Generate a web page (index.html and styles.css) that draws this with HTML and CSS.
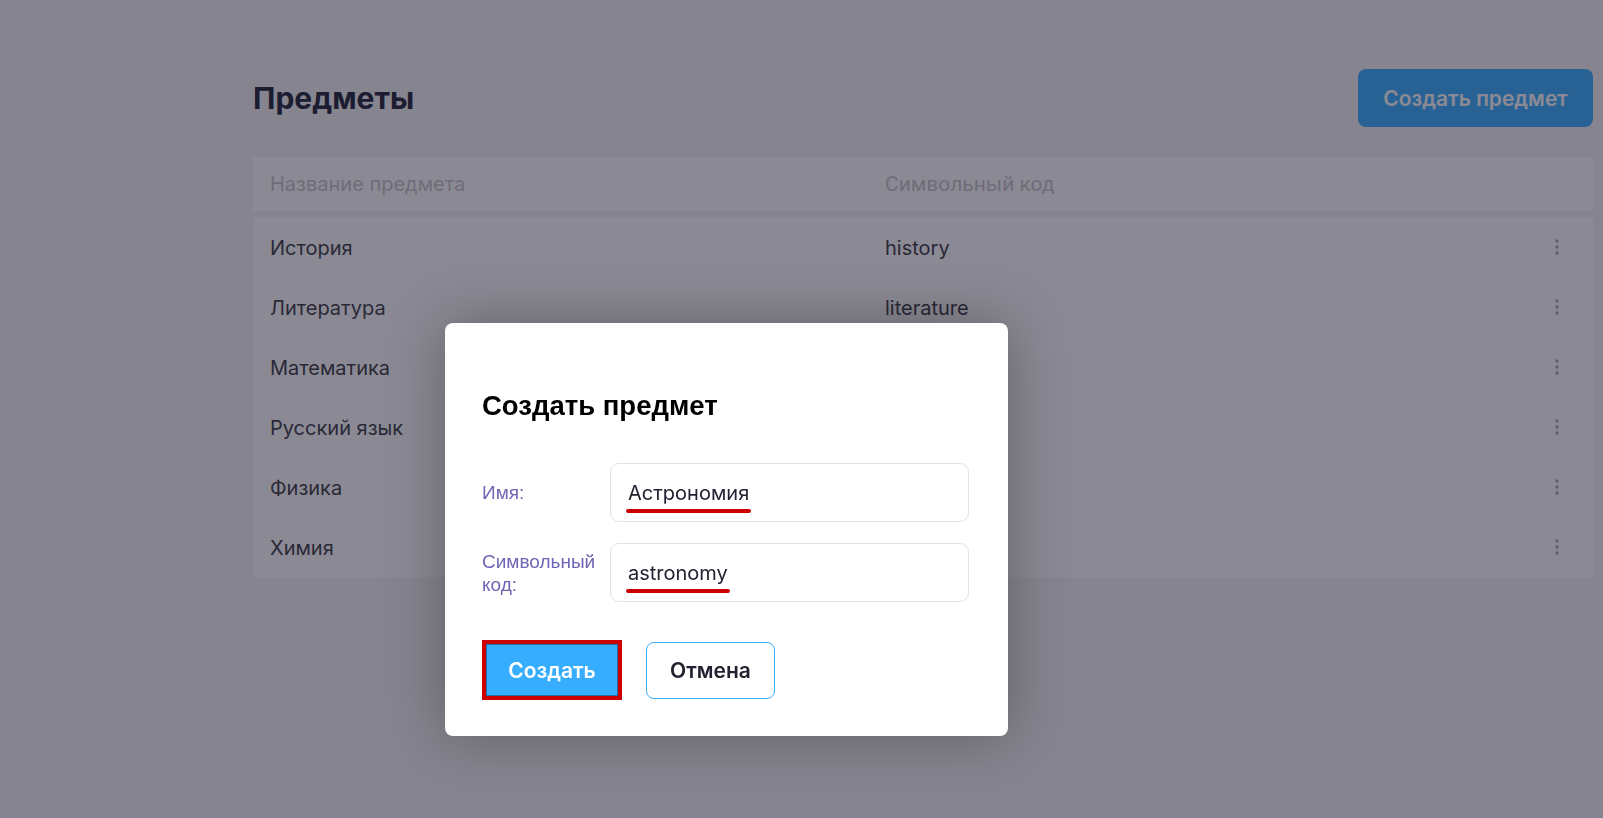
FILE: index.html
```html
<!DOCTYPE html>
<html lang="ru">
<head>
<meta charset="utf-8">
<title>Предметы</title>
<link rel="stylesheet" href="styles.css">
</head>
<body>
<div class="page">
  <div class="topbar">
    <h1 class="title">Предметы</h1>
    <button class="btn-create">Создать предмет</button>
  </div>
  <div class="table">
    <div class="thead">
      <div class="th">Название предмета</div>
      <div class="th th-cond"><span>Символьный код</span></div>
      <div></div>
    </div>
    <div class="tbody">
      <div class="row"><div class="cell">История</div><div class="cell">history</div><div class="more"><svg width="4" height="16" viewBox="0 0 4 16"><circle cx="2" cy="2" r="1.7"/><circle cx="2" cy="8" r="1.7"/><circle cx="2" cy="14" r="1.7"/></svg></div></div>
      <div class="row"><div class="cell">Литература</div><div class="cell">literature</div><div class="more"><svg width="4" height="16" viewBox="0 0 4 16"><circle cx="2" cy="2" r="1.7"/><circle cx="2" cy="8" r="1.7"/><circle cx="2" cy="14" r="1.7"/></svg></div></div>
      <div class="row"><div class="cell">Математика</div><div class="cell">mathematics</div><div class="more"><svg width="4" height="16" viewBox="0 0 4 16"><circle cx="2" cy="2" r="1.7"/><circle cx="2" cy="8" r="1.7"/><circle cx="2" cy="14" r="1.7"/></svg></div></div>
      <div class="row"><div class="cell">Русский язык</div><div class="cell">russian</div><div class="more"><svg width="4" height="16" viewBox="0 0 4 16"><circle cx="2" cy="2" r="1.7"/><circle cx="2" cy="8" r="1.7"/><circle cx="2" cy="14" r="1.7"/></svg></div></div>
      <div class="row"><div class="cell">Физика</div><div class="cell">physics</div><div class="more"><svg width="4" height="16" viewBox="0 0 4 16"><circle cx="2" cy="2" r="1.7"/><circle cx="2" cy="8" r="1.7"/><circle cx="2" cy="14" r="1.7"/></svg></div></div>
      <div class="row"><div class="cell">Химия</div><div class="cell">chemistry</div><div class="more"><svg width="4" height="16" viewBox="0 0 4 16"><circle cx="2" cy="2" r="1.7"/><circle cx="2" cy="8" r="1.7"/><circle cx="2" cy="14" r="1.7"/></svg></div></div>
    </div>
  </div>
</div>

<div class="overlay">
  <div class="modal">
    <h2 class="modal-title">Создать предмет</h2>
    <div class="form">
      <label class="label">Имя:</label>
      <div class="input"><span class="mark">Астрономия</span></div>
      <label class="label">Символьный код:</label>
      <div class="input"><span class="mark">astronomy</span></div>
    </div>
    <div class="actions">
      <button class="btn-submit">Создать</button>
      <button class="btn-cancel">Отмена</button>
    </div>
  </div>
</div>
</body>
</html>
```
FILE: styles.css
```css
* { box-sizing: border-box; }

html, body {
  margin: 0;
  height: 100%;
}

body {
  background: #f5f5f5;
  font-family: Inter, "Noto Sans", sans-serif;
  color: #3a3a44;
  overflow: hidden;
}

.page {
  padding: 69px 10px 0 253px;
}

.topbar {
  display: flex;
  justify-content: space-between;
  align-items: center;
  height: 58px;
}

.title {
  margin: 0;
  font-size: 30px;
  font-weight: 700;
  color: #22243a;
  line-height: 1;
}

.btn-create {
  width: 235px;
  height: 58px;
  border: none;
  border-radius: 8px;
  background: #38aeff;
  color: #fff;
  font-family: Inter, sans-serif;
  font-size: 21px;
  font-weight: 600;
}

.table {
  margin-top: 30px;
}

.thead,
.row {
  display: grid;
  grid-template-columns: 615px 1fr 72px;
  align-items: center;
  padding-left: 17px;
  background: #fff;
}

.thead {
  height: 54px;
}

.th {
  font-size: 20px;
  color: #c4c4c8;
}

.th-cond span {
  font-family: Roboto, sans-serif;
  font-size: 21px;
  white-space: nowrap;
}

.tbody {
  margin-top: 6px;
  background: #fff;
}

.row {
  height: 60px;
}

.cell {
  font-size: 20px;
  color: #3a3a44;
  padding-top: 1px;
}

.more {
  display: flex;
  justify-content: center;
  align-items: center;
}

.more svg {
  fill: #a7a7ab;
}

.overlay {
  position: fixed;
  inset: 0;
  background: rgba(23, 21, 41, 0.5);
}

.modal {
  position: absolute;
  left: 445px;
  top: 323px;
  width: 563px;
  height: 413px;
  background: #fff;
  border-radius: 8px;
  box-shadow: 0 0 60px rgba(0, 0, 0, 0.3);
  padding: 66px 39px 0 37px;
}

.modal-title {
  margin: 0;
  font-family: "Liberation Sans", Arial, sans-serif;
  font-size: 27.5px;
  font-weight: 700;
  color: #000;
  line-height: 34px;
}

.form {
  margin-top: 40px;
  display: grid;
  grid-template-columns: 128px 1fr;
  row-gap: 21px;
  align-items: center;
}

.label {
  font-family: "Liberation Sans", Arial, sans-serif;
  font-size: 19px;
  line-height: 23px;
  color: #6e66b4;
  padding-right: 8px;
}

.input {
  height: 59px;
  border: 1px solid #e2e2e6;
  border-radius: 9px;
  padding: 0 17px;
  display: flex;
  align-items: center;
  font-size: 20px;
  color: #222233;
}

.mark {
  position: relative;
}

.mark::after {
  content: "";
  position: absolute;
  left: -2px;
  right: -2px;
  bottom: -8px;
  height: 4px;
  border-radius: 2px;
  background: #cc0000;
}

.actions {
  margin-top: 38px;
  display: flex;
  align-items: center;
  gap: 24px;
}

.btn-submit {
  width: 140px;
  height: 60px;
  border: 4px solid #cc0000;
  background: #36adff;
  color: #fff;
  font-family: Inter, sans-serif;
  font-size: 21px;
  font-weight: 600;
  box-shadow: inset 0 0 0 1px #1f6fa3;
}

.btn-cancel {
  width: 129px;
  height: 57px;
  border: 1px solid #38aeff;
  border-radius: 8px;
  background: #fff;
  color: #222230;
  font-family: Inter, sans-serif;
  font-size: 21px;
  font-weight: 600;
}
```
